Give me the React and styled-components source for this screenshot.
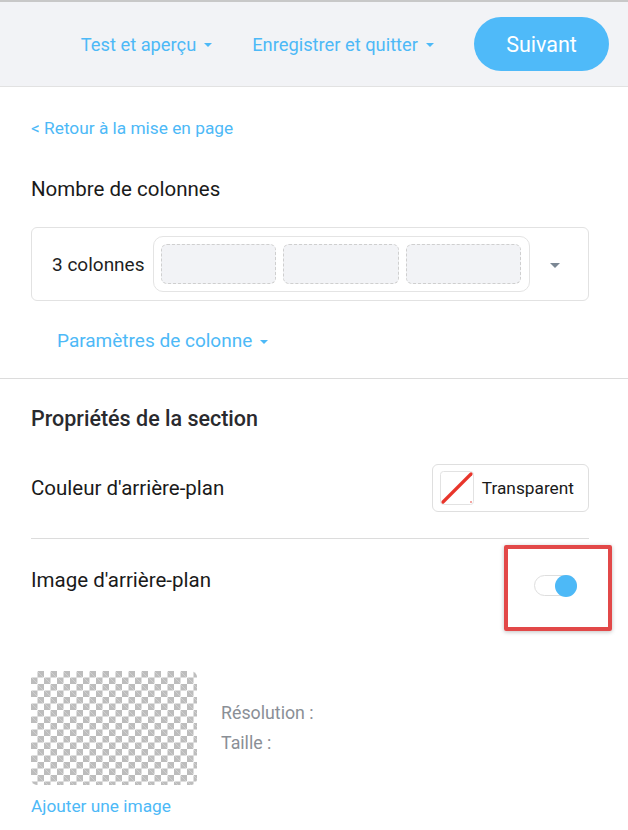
import styled, { createGlobalStyle } from "styled-components"

const GlobalStyle = createGlobalStyle`
    body{
        margin: 0;
        background: #ffffff;
        font-family: Roboto, "Liberation Sans", sans-serif;
        color: #1e1e1e;
    }
`

const blue = "#4db9f7"

const Page = styled.div`
    width: 628px;
    min-height: 830px;
    overflow: hidden;
`

const Header = styled.header`
    display: flex;
    flex-direction: row;
    align-items: center;
    justify-content: flex-end;

    height: 84px;
    padding-right: 19px;
    background-color: #f2f3f6;
    border-top: 2px solid #c8c8c8;
    border-bottom: 1px solid #e2e2e2;
`

const MenuLink = styled.span`
    display: flex;
    align-items: center;
    gap: 8px;
    color: ${blue};
    font-size: 18.3px;
    margin-right: ${({ $gap }) => $gap}px;
    cursor: pointer;
`

const Caret = styled.span`
    display: inline-block;
    width: 0;
    height: 0;
    border-left: ${({ $size }) => $size || 4}px solid transparent;
    border-right: ${({ $size }) => $size || 4}px solid transparent;
    border-top: ${({ $size }) => $size || 4}px solid ${({ $color }) => $color || blue};
    margin-top: 2px;
`

const NextButton = styled.button`
    width: 135px;
    height: 54px;
    border: none;
    border-radius: 27px;
    background-color: #4fbaf9;
    color: #ffffff;
    font-family: inherit;
    font-size: 21.5px;
    cursor: pointer;
`

const Block = styled.section`
    padding: 0 39px 0 31px;
    ${({ $border }) => $border && "border-bottom: 1px solid #dcdcdc;"}
`

const BackLink = styled.div`
    padding-top: 31px;
    color: ${blue};
    font-size: 17.3px;
    line-height: 20px;
`

const Title = styled.h2`
    margin: 0;
    font-size: ${({ $size }) => $size || 20.5}px;
    font-weight: ${({ $weight }) => $weight || 400};
    color: ${({ $color }) => $color || "#1a1a1a"};
    line-height: 24px;
    margin-top: ${({ $top }) => $top}px;
`

const ColumnBox = styled.div`
    display: flex;
    flex-direction: row;
    align-items: center;

    margin-top: 26px;
    height: 72px;
    padding: 0 20px;
    border: 1px solid #e2e2e2;
    border-radius: 6px;

    > .label{
        font-size: 19px;
        margin-right: 8px;
        white-space: nowrap;
    }

    > .caret{
        margin-left: auto;
        margin-right: 8px;
    }
`

const ColumnPreview = styled.div`
    display: grid;
    grid-template-columns: repeat(3, 1fr);
    gap: 7px;

    width: 377px;
    flex-shrink: 0;
    height: 56px;
    box-sizing: border-box;
    padding: 7px 7px;
    border: 1px solid #e4e4e4;
    border-radius: 10px;
`

const ColumnCell = styled.div`
    background-color: #f2f3f6;
    border: 1px dashed #cfcfcf;
    border-radius: 6px;
`

const ParamsLink = styled.div`
    display: flex;
    align-items: center;
    gap: 8px;
    padding: 28px 0 25px 26px;
    color: ${blue};
    font-size: 19px;
    line-height: 24px;
`

const Row = styled.div`
    display: flex;
    flex-direction: row;
    align-items: ${({ $align }) => $align || "center"};
    justify-content: space-between;
    ${({ $border }) => $border && "border-bottom: 1px solid #dcdcdc;"}
    padding: ${({ $pad }) => $pad};

    > .label{
        font-size: 20.5px;
        line-height: 22px;
        color: #1a1a1a;
    }
`

const ColorButton = styled.button`
    display: flex;
    align-items: center;
    gap: 8px;

    height: 48px;
    padding: 0 14px 0 7px;
    background: #ffffff;
    border: 1px solid #dfdfdf;
    border-radius: 6px;
    font-family: inherit;
    font-size: 17.3px;
    color: #1a1a1a;

    svg{
        width: 34px;
        height: 34px;
    }
`

const ToggleWrap = styled.div`
    position: relative;
    margin-right: 12px;
    margin-top: 6px;
`

const Toggle = styled.div`
    position: relative;
    width: 43px;
    height: 21px;
    box-sizing: border-box;
    border: 1px solid #dedede;
    border-radius: 11px;
    background: #ffffff;

    &::after{
        content: "";
        position: absolute;
        right: -1px;
        top: -1px;
        width: 22px;
        height: 22px;
        border-radius: 50%;
        background-color: #4db9f7;
    }
`

const Highlight = styled.div`
    position: absolute;
    left: -30px;
    top: -30px;
    width: 108px;
    height: 86px;
    box-sizing: border-box;
    border: 4px solid #e24848;
    border-radius: 2px;
    box-shadow: 0 1px 4px rgba(0, 0, 0, 0.25);
`

const ImageRow = styled.div`
    display: flex;
    flex-direction: row;
    align-items: flex-start;
    gap: 24px;
    margin-top: 75px;
`

const Checker = styled.div`
    width: 166px;
    height: 114px;
    border-radius: 6px;
    background-color: #ffffff;
    background-image:
        linear-gradient(45deg, #bdbdbd 25%, transparent 25%, transparent 75%, #bdbdbd 75%),
        linear-gradient(45deg, #bdbdbd 25%, transparent 25%, transparent 75%, #bdbdbd 75%);
    background-size: 13px 13px;
    background-position: 0 0, 6.5px 6.5px;
`

const Meta = styled.div`
    display: flex;
    flex-direction: column;
    gap: 10px;
    margin-top: 32px;
    color: #8a8f96;
    font-size: 17.8px;
    line-height: 20px;
`

const AddLink = styled.div`
    margin-top: 11px;
    color: ${blue};
    font-size: 17.3px;
    line-height: 20px;
`

const App = () => {
    return(
        <Page>
            <GlobalStyle />
            <Header>
                <MenuLink $gap={40}>Test et aperçu <Caret /></MenuLink>
                <MenuLink $gap={40}>Enregistrer et quitter <Caret /></MenuLink>
                <NextButton>Suivant</NextButton>
            </Header>

            <Block $border>
                <BackLink>&lt; Retour à la mise en page</BackLink>
                <Title $top={39}>Nombre de colonnes</Title>
                <ColumnBox>
                    <span className="label">3 colonnes</span>
                    <ColumnPreview>
                        <ColumnCell />
                        <ColumnCell />
                        <ColumnCell />
                    </ColumnPreview>
                    <Caret className="caret" $size={5} $color="#7b8794" />
                </ColumnBox>
                <ParamsLink>Paramètres de colonne <Caret /></ParamsLink>
            </Block>

            <Block>
                <Title $top={28} $size={21.5} $weight={500} $color="#2a2a2e">Propriétés de la section</Title>
                <Row $border $pad="33px 0 26px">
                    <span className="label">Couleur d'arrière-plan</span>
                    <ColorButton>
                        <svg viewBox="0 0 34 34">
                            <rect x="0.5" y="0.5" width="33" height="33" rx="3" fill="#fff" stroke="#e2e2e2" />
                            <line x1="3" y1="31" x2="31" y2="3" stroke="#e8352b" strokeWidth="3.2" strokeLinecap="round" />
                            <circle cx="31" cy="31" r="1" fill="#f08a84" />
                        </svg>
                        Transparent
                    </ColorButton>
                </Row>
                <Row $align="flex-start" $pad="30px 0 0">
                    <span className="label">Image d'arrière-plan</span>
                    <ToggleWrap>
                        <Toggle />
                        <Highlight />
                    </ToggleWrap>
                </Row>
                <ImageRow>
                    <Checker />
                    <Meta>
                        <span>Résolution :</span>
                        <span>Taille :</span>
                    </Meta>
                </ImageRow>
                <AddLink>Ajouter une image</AddLink>
            </Block>
        </Page>
    )
}

export default App
